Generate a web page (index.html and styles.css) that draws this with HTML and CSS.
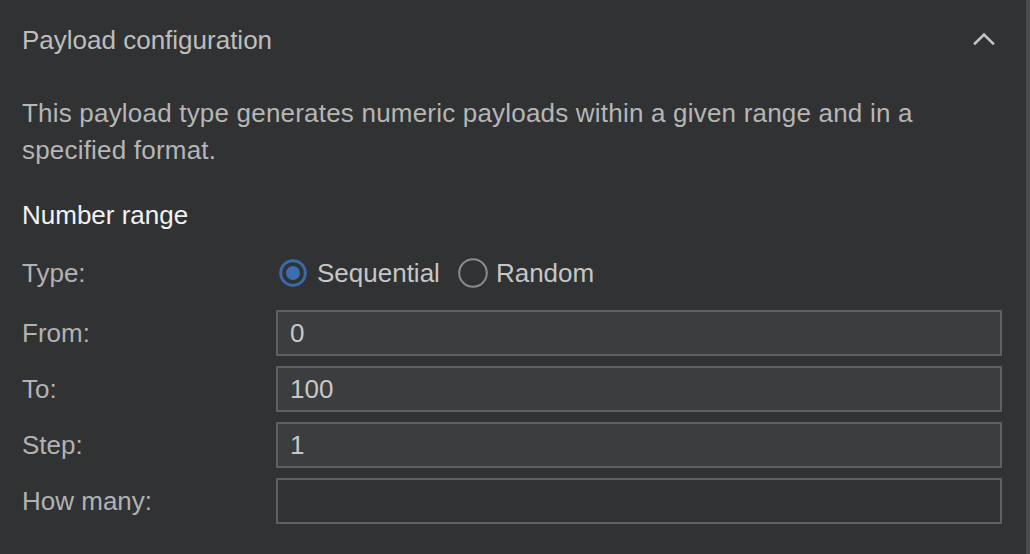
FILE: index.html
```html
<!DOCTYPE html>
<html>
<head>
<meta charset="utf-8">
<link rel="stylesheet" href="styles.css">
</head>
<body>
<div class="panel">
  <div class="header">
    <span class="title">Payload configuration</span>
    <svg class="chevron" width="24" height="14" viewBox="0 0 24 14"><path d="M3 11.5 L12 2.5 L21 11.5" fill="none" stroke="#c4c4c4" stroke-width="2.6" stroke-linecap="square"/></svg>
  </div>
  <p class="desc">This payload type generates numeric payloads within a given range and in a specified format.</p>
  <h3 class="section">Number range</h3>
  <div class="form">
    <div class="label type-label">Type:</div>
    <div class="radios">
      <span class="radio">
        <svg width="28" height="28" viewBox="0 0 28 28"><circle cx="14" cy="14" r="12.3" fill="none" stroke="#3a6ba9" stroke-width="3"/><circle cx="14" cy="14" r="7" fill="#3c6fb2"/></svg>
        <span>Sequential</span>
      </span>
      <span class="radio">
        <svg width="30" height="30" viewBox="0 0 30 30"><circle cx="15" cy="15" r="13.8" fill="none" stroke="#8a8b8c" stroke-width="2"/></svg>
        <span>Random</span>
      </span>
    </div>
    <div class="label">From:</div>
    <div class="input filled">0</div>
    <div class="label">To:</div>
    <div class="input filled">100</div>
    <div class="label">Step:</div>
    <div class="input filled">1</div>
    <div class="label">How many:</div>
    <div class="input"></div>
  </div>
</div>
</body>
</html>
```
FILE: styles.css
```css
html, body {
  margin: 0;
  padding: 0;
  background: #313234;
}
body {
  width: 1030px;
  height: 554px;
  overflow: hidden;
  font-family: "Liberation Sans", Arial, sans-serif;
  font-size: 26px;
}
.panel {
  box-sizing: border-box;
  width: 1030px;
  height: 554px;
  padding: 0 24px 0 22px;
  border-right: 4px solid #4a4b4d;
}
.header {
  height: 80px;
  display: flex;
  align-items: center;
  justify-content: space-between;
}
.title {
  color: #bebebe;
}
.chevron {
  margin-right: 6px;
  margin-top: -3px;
}
.desc {
  margin: 15px 0 0 0;
  color: #b6b6b6;
  line-height: 37px;
  max-width: 940px;
  letter-spacing: 0.2px;
}
.section {
  margin: 28px 0 0 0;
  font-weight: normal;
  font-size: 26px;
  line-height: 37px;
  color: #f2f2f2;
}
.form {
  margin-top: 20px;
  display: grid;
  grid-template-columns: 254px 1fr;
  grid-auto-rows: 46px;
  row-gap: 10px;
  align-items: center;
}
.label {
  color: #b2b2b2;
}
.type-label, .radios {
  margin-bottom: 8px;
}
.radios {
  display: flex;
  align-items: center;
  padding-left: 3px;
  color: #c6c6c6;
}
.radio {
  display: flex;
  align-items: center;
  gap: 10px;
  margin-right: 18px;
}
.radio:last-child {
  gap: 8px;
}
.radio svg {
  display: block;
}
.input {
  box-sizing: border-box;
  height: 46px;
  border: 2px solid #5f6062;
  background: #313234;
  color: #c8c8c8;
  padding-left: 12px;
  display: flex;
  align-items: center;
}
.input.filled {
  background: #3c3d3f;
}
```
